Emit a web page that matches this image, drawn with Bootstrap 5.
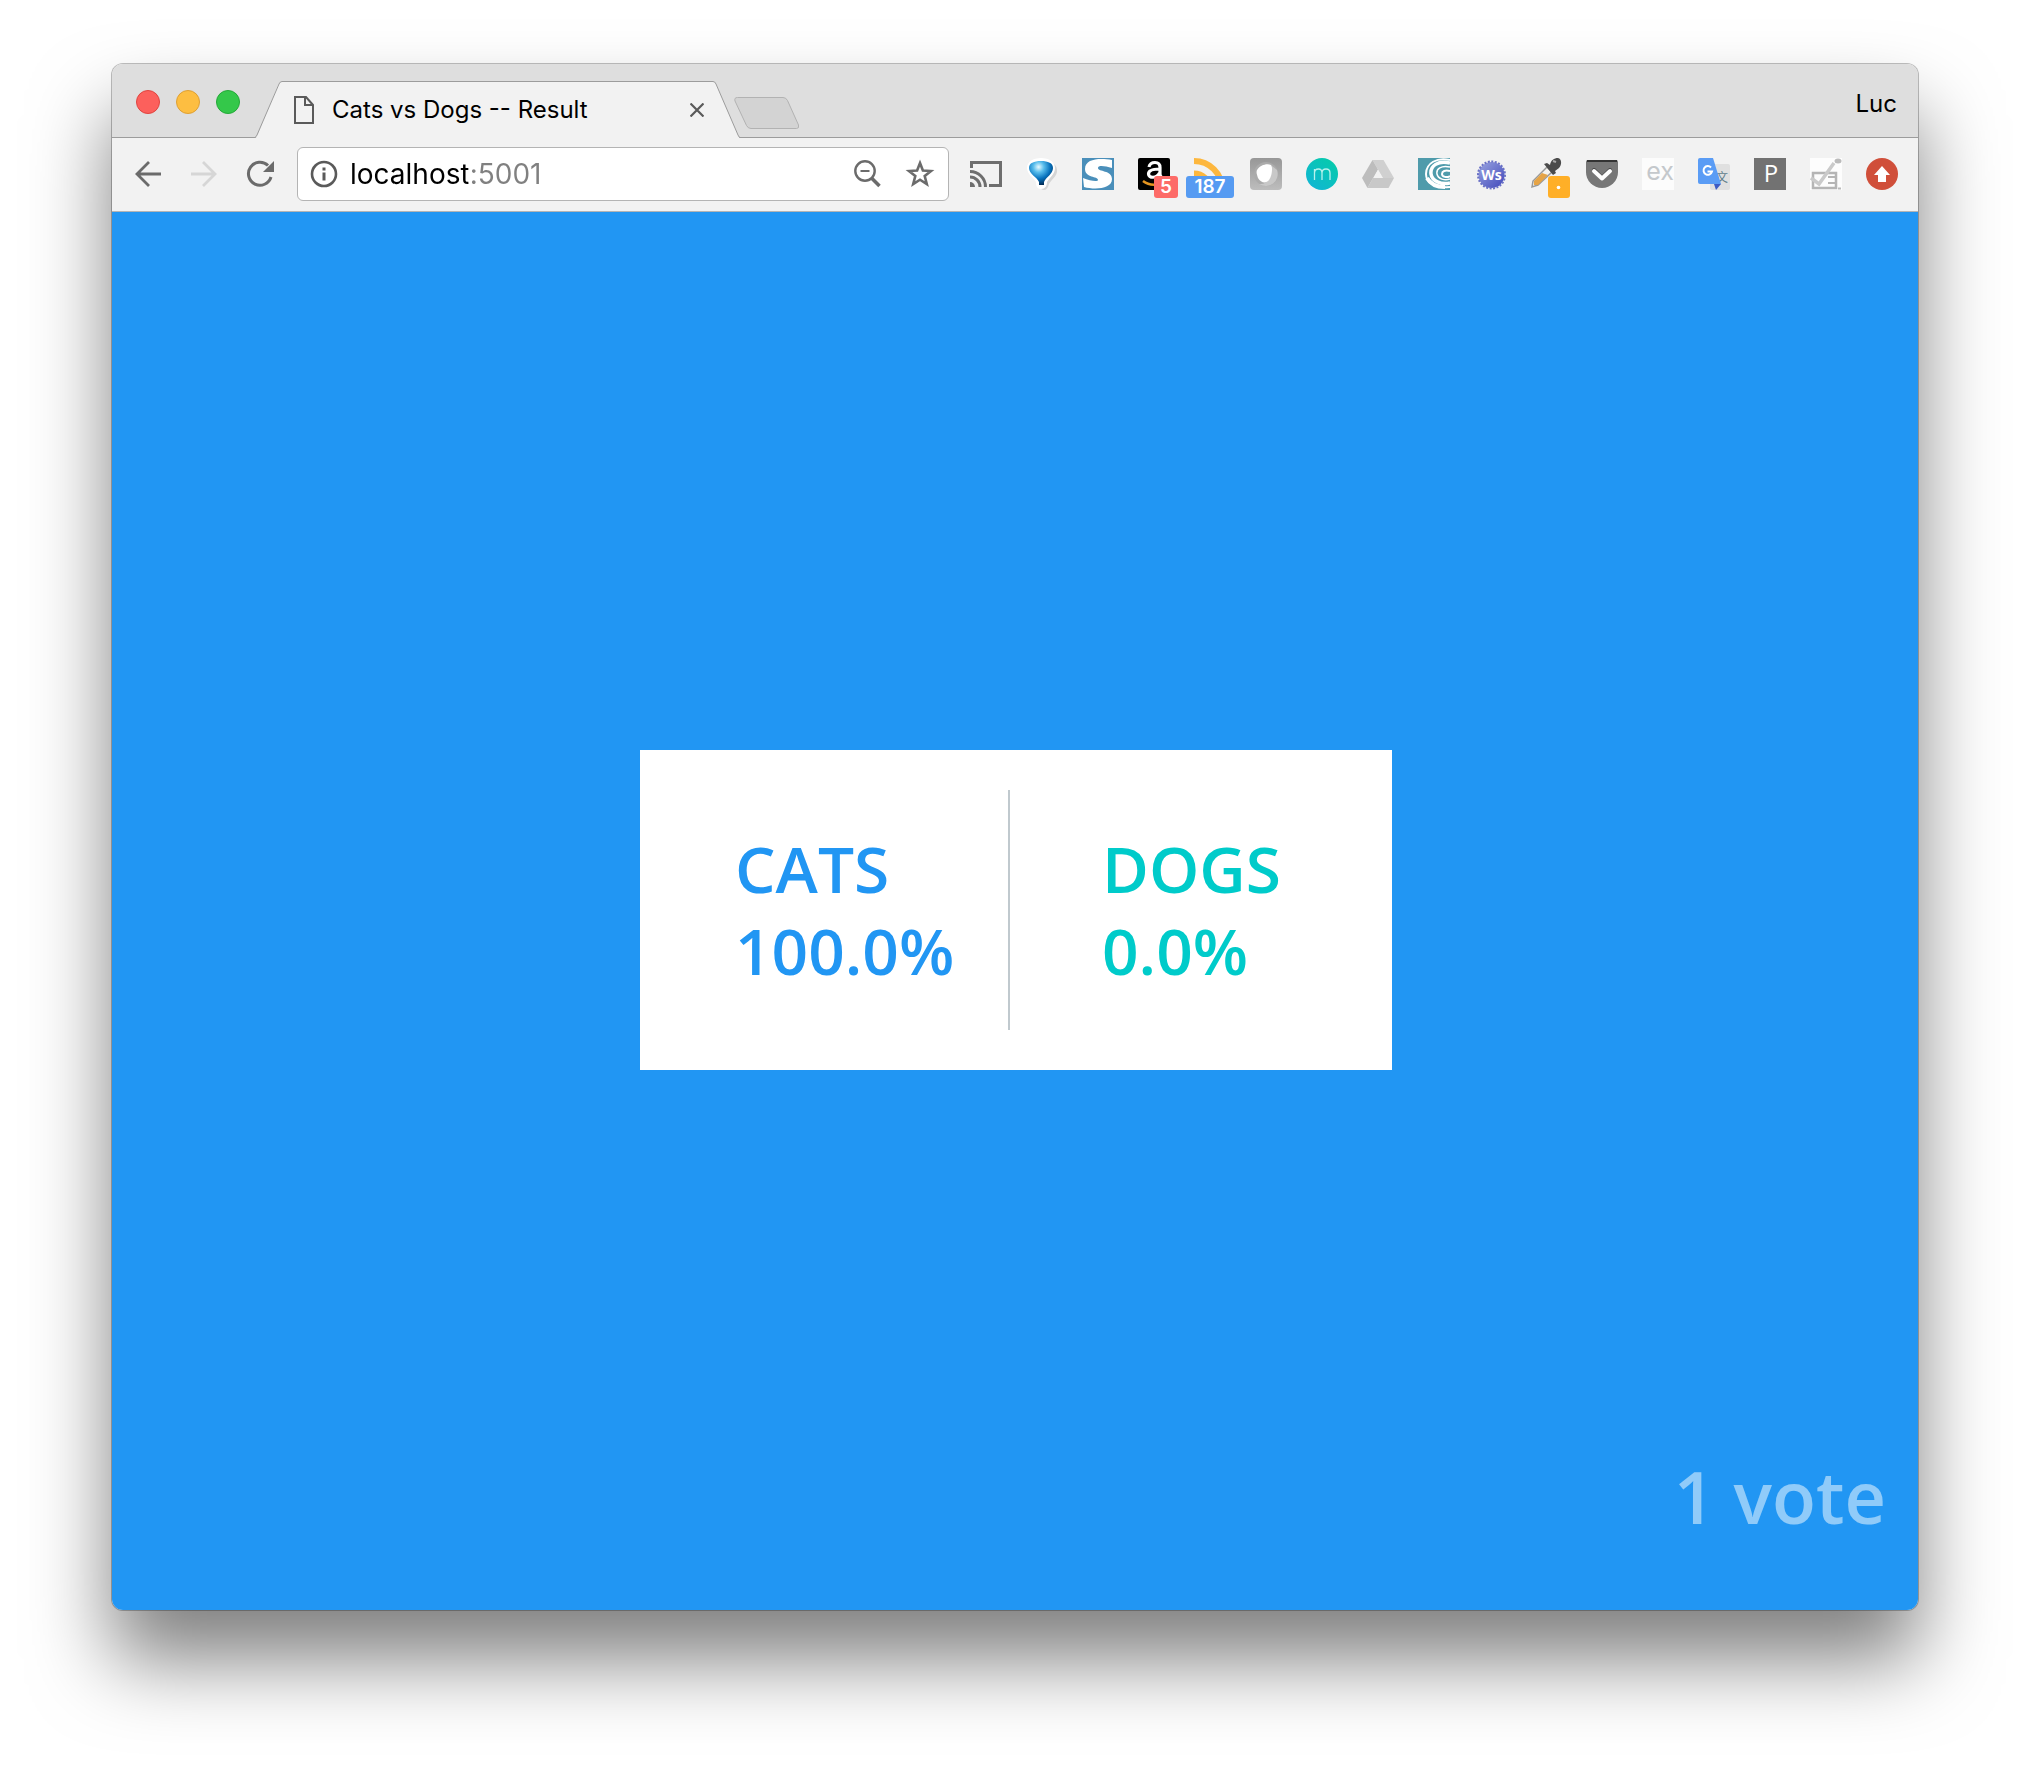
<!DOCTYPE html>
<html lang="en">
<head>
<meta charset="utf-8">
<meta name="viewport" content="width=device-width, initial-scale=1">
<title>Cats vs Dogs -- Result</title>
<link href="https://cdn.jsdelivr.net/npm/bootstrap@5.3.0/dist/css/bootstrap.min.css" rel="stylesheet">
<style>
  body { background: #fff; font-family: Inter, "Liberation Sans", sans-serif; color: #000; }
  .desktop { padding: 64px 112px 160px; min-height: 100vh; }
  .window { border-radius: 11px; box-shadow: 0 0 0 1px rgba(0,0,0,.25), 0 50px 80px rgba(0,0,0,.5); }
  .titlebar { height: 74px; background: #dedede; border-radius: 11px 11px 0 0; box-shadow: inset 0 -1px #9c9c9c; padding: 0 21px 0 24px; }
  .lights { padding-top: 26px; margin-right: 15px; }
  .light { width: 24px; height: 24px; border-radius: 50%; padding: 0; border: 1px solid; }
  .light-red { background: #fc605c; border-color: #e0443f; }
  .light-amber { background: #fdbe41; border-color: #dfa033; }
  .light-green { background: #34c84a; border-color: #24a938; }
  .tab-mid { width: 431px; height: 57px; background: #f2f2f2; border-top: 1px solid #9c9c9c; padding: 0 9px 0 12px; font-size: 24px; line-height: 28px; }
  .tab-title { padding-left: 18px; }
  .profile { font-size: 24px; line-height: 28px; padding-top: 26px; }
  .new-tab { margin: 0 0 9px -6px; }
  .plain { background: none; border: 0; padding: 0; display: flex; color: #6e6e6e; }
  .toolbar { height: 74px; background: #f2f2f2; border-bottom: 1px solid #b4b4b4; padding: 0 20px 2px; gap: 21px; }
  .nav-set { gap: 24px; }
  .omnibox { height: 54px; background: #fff; border: 1px solid #b4b4b4; border-radius: 6px; padding: 0 13px 0 12px; min-width: 0; }
  .url { font-size: 28px; line-height: 36px; padding: 0; margin-left: 12px; min-width: 0; border: 0; outline: 0; color: transparent; background: linear-gradient(90deg, #000 118px, #808080 118px); -webkit-background-clip: text; background-clip: text; }
  .exts { gap: 24px; }
  .ext { width: 32px; height: 32px; position: relative; }
  .tag { position: absolute; top: 18px; height: 22px; border-radius: 3px; color: #fff; font-size: 19px; line-height: 22px; font-weight: 600; text-align: center; }
  .tag-red { left: 16px; width: 24px; background: #fd6b68; }
  .tag-blue { left: -8px; width: 48px; background: #569bf2; }
  .tag-amber { left: 18px; width: 22px; background: #ffaf27; }
  .page { min-height: 1398px; background: #2196f3; border-radius: 0 0 11px 11px; padding: 0 0 2px 2px; font-family: "Open Sans", "Noto Sans", sans-serif; font-weight: 600; display: grid; grid-template-rows: 1fr auto 1fr; }
  .results { width: 752px; height: 320px; background: #fff; padding: 40px 0; grid-row: 2; justify-self: center; }
  .choice { padding-left: 95px; font-size: 64px; line-height: 82px; }
  .choice + .choice { padding-left: 92px; }
  .cats { width: 370px; border-right: 2px solid #c0c9ce; color: #2196f3; }
  .dogs { color: #00cbca; }
  .votes { grid-row: 3; align-self: end; text-align: right; font-size: 72px; line-height: 98px; padding: 0 32px 63px; color: rgba(255,255,255,.5); }
</style>
</head>
<body>
<div class="desktop">
 <div class="window">
  <header class="titlebar d-flex">
    <div class="lights d-flex gap-3">
      <button class="light light-red" aria-label="Close window"></button>
      <button class="light light-amber" aria-label="Minimise window"></button>
      <button class="light light-green" aria-label="Zoom window"></button>
    </div>
    <div class="d-flex align-items-end">
      <svg width="27" height="57" viewBox="0 0 27 57"><path d="M0 57Q2 56 3 53L23 4Q25 .5 27 .5V57Z" fill="#f2f2f2"/><path d="M0 56.500Q1 56 2 54L24 3Q25 .5 27 .5" fill="none" stroke="#9c9c9c"/></svg>
      <div class="tab-mid d-flex align-items-center">
        <svg width="20" height="28" viewBox="0 0 20 28" fill="none" stroke="#5a5a5a" stroke-width="2"><path d="M1 1h11l7 8v18H1zM11 1v8h8"/></svg>
        <span class="tab-title flex-grow-1 text-nowrap">Cats vs Dogs -- Result</span>
        <button class="plain" aria-label="Close tab"><svg width="14" height="14" viewBox="0 0 14 14" stroke="#5a5a5a" stroke-width="2.200"><path d="M.5.5l13 13M13.500.5l-13 13"/></svg></button>
      </div>
      <svg width="27" height="57" viewBox="0 0 27 57"><path d="M0 .5Q2 .5 3 3L25 54Q26 57 27 57H0Z" fill="#f2f2f2"/><path d="M0 .5Q2 .5 3 3L25 54Q26 56.500 27 56.500" fill="none" stroke="#9c9c9c"/></svg>
      <button class="plain new-tab" aria-label="New tab"><svg width="66" height="32" viewBox="0 0 66 32"><path d="M3.500.5H49Q52 .5 53.500 3.500L64.500 28Q65.500 31.500 62.500 31.500H17Q14 31.500 12.500 28.500L1 4Q0 .5 3.500.5Z" fill="#d3d3d3" stroke="#b2b2b2"/></svg></button>
    </div>
    <div class="profile ms-auto">Luc</div>
  </header>

  <nav class="toolbar d-flex align-items-center" aria-label="Browser toolbar">
    <div class="nav-set d-flex">
      <button class="plain" aria-label="Back"><svg width="32" height="32" viewBox="0 0 32 32" fill="none" stroke="#6b6b6b" stroke-width="2.800"><path d="M29 16H5M17 4L5 16l12 12"/></svg></button>
      <button class="plain" aria-label="Forward"><svg width="32" height="32" viewBox="0 0 32 32" fill="none" stroke="#d6d6d6" stroke-width="2.800"><path d="M3 16h24M15 4l12 12-12 12"/></svg></button>
      <button class="plain" aria-label="Reload"><svg width="32" height="32" viewBox="0 0 32 32"><path d="M27 19A11.500 11.500 0 1 1 24 7.500" fill="none" stroke="#6b6b6b" stroke-width="3"/><path d="M30 3v11H19z" fill="#6b6b6b"/></svg></button>
    </div>
    <div class="omnibox d-flex align-items-center flex-grow-1">
      <svg width="28" height="28" viewBox="0 0 28 28"><circle cx="14" cy="14" r="12" fill="none" stroke="#5a5a5a" stroke-width="2.600"/><path d="M12.500 7.500h3v3h-3zM12.500 12.500h3v8h-3z" fill="#5a5a5a"/></svg>
      <input class="url flex-grow-1" type="text" aria-label="Address" value="localhost:5001" spellcheck="false">
      <svg width="28" height="28" viewBox="0 0 28 28" fill="none" stroke="#6b6b6b"><circle cx="12" cy="11" r="9.700" stroke-width="2.400"/><path d="M7.500 11h9" stroke-width="2"/><path d="M18.500 18l8 8" stroke-width="3.600"/></svg>
      <button class="plain ms-4" aria-label="Bookmark this page"><svg width="30" height="30" viewBox="0 0 30 30"><path d="M15 4l2.900 7.500 8.100.5-6.300 5.100 2.100 8L15 20.700l-6.800 4.400 2.100-8L4 12l8.100-.5z" fill="none" stroke="#6b6b6b" stroke-width="2.600"/></svg></button>
    </div>
    <div class="exts d-flex">
      <div class="ext"><svg width="32" height="32" viewBox="0 0 32 32" fill="none" stroke="#6e6e6e" stroke-width="3"><path d="M1.500 10V4.500h29v23H19"/><path d="M0 13.500A15.500 15.500 0 0 1 15.500 29M0 19A10 10 0 0 1 10 29"/><path d="M0 24a5 5 0 0 1 5 5H0z" fill="#6e6e6e" stroke="none"/></svg></div>
      <div class="ext"><svg width="32" height="32" viewBox="0 0 32 32"><defs><radialGradient id="bal" cx=".4" cy=".25" r=".75"><stop offset="0" stop-color="#e8faff"/><stop offset=".3" stop-color="#58bdec"/><stop offset=".65" stop-color="#0872bd"/><stop offset="1" stop-color="#022e58"/></radialGradient></defs><path d="M4 14C4 6 10 3 18 3s14 4 13 11c-1 5-5 7-8 12-1 4-3 6-5 6-4 0-4-5-5-7z" fill="#d5d5d5"/><path d="M1 10C1 4 7 0 15 0s14 4 14 10c0 6-5 9-8 14 0 4-2 7-6 7s-5-3-5-7C7 19 1 16 1 10z" fill="#fff"/><path d="M3 10c0-5 5-7 12-7s12 2 12 7c0 6-7 9-9 14v3h-5v-3C11 19 3 16 3 10z" fill="url(#bal)"/></svg></div>
      <div class="ext"><svg width="32" height="32" viewBox="0 0 32 32"><path fill="#4a8fba" d="M0 0h32v32H0z"/><path d="M30 2v8c-7-2-14-3-14 0 0 4 14 2 14 11 0 10-17 11-28 8l-1-9c7 3 15 4 15 2 0-4-13-2-13-11C3 0 19 0 30 2z" fill="#fff"/></svg></div>
      <div class="ext"><svg width="32" height="32" viewBox="0 0 32 32"><rect width="32" height="32" rx="2" fill="#000"/><path d="M11 9q1-4.500 6-4.500 5 0 5 5V16q0 2 1.500 3M21.500 11c-7 0-11 1-11 5s8 5 11-1" fill="none" stroke="#fff" stroke-width="3.200"/><path d="M5 23q9 7 22 1" fill="none" stroke="#e59520" stroke-width="2.500"/></svg><span class="tag tag-red">5</span></div>
      <div class="ext"><svg width="32" height="32" viewBox="0 0 32 32" fill="none" stroke="#fdb73e" stroke-width="6"><path d="M0 3A28 28 0 0 1 28 31M0 15.500A16 16 0 0 1 16 31"/></svg><span class="tag tag-blue">187</span></div>
      <div class="ext"><svg width="32" height="32" viewBox="0 0 32 32"><defs><linearGradient id="gr" x2="0" y2="1"><stop stop-color="#979797"/><stop offset="1" stop-color="#bdbdbd"/></linearGradient></defs><rect width="32" height="32" rx="4" fill="url(#gr)"/><circle cx="16" cy="16" r="12" fill="#ababab"/><path d="M27 12a12 12 0 0 1-18 14c10 1 12-8 13-18z" fill="#c8c8c8"/><path d="M7 12c3-5 10-7 14-5 2 2 1 11-2 15s-8 3-11-2c-1-3-2-6-1-8z" fill="#fff"/></svg></div>
      <div class="ext"><svg width="32" height="32" viewBox="0 0 32 32"><defs><linearGradient id="tg" x1="1" x2=".2" y2="1"><stop stop-color="#05cda6"/><stop offset="1" stop-color="#10b6d4"/></linearGradient></defs><circle cx="16" cy="16" r="16" fill="url(#tg)"/><path d="M8.500 22V11m0 4q0-4 4-4 3.500 0 3.500 4v7m0-7q0-4 4-4t4 4v7" fill="none" stroke="#b7f1ec" stroke-width="1.300"/></svg></div>
      <div class="ext"><svg width="32" height="32" viewBox="0 0 32 32"><path d="M10.500 2h11L32 20H21z" fill="#d0d0d0"/><path d="M10.500 2L0 20l5.500 10L16 11.500z" fill="#bdbdbd"/><path d="M11 20h21l-5.500 10h-21z" fill="#c8c8c8"/><path d="M16 12l4.500 8h-9z" fill="#f2f2f2"/></svg></div>
      <div class="ext"><svg width="32" height="32" viewBox="0 0 32 32"><path fill="#4f9bab" d="M0 0h32v32H0z"/><g fill="none" stroke="#fff"><path d="M32 2C19-1 8 5 8 16c0 9 9 14 24 13" stroke-width="2"/><path d="M32 5C20 2 12 8 13 16c1 7 10 11 19 9" stroke-width="3.500"/><path d="M32 9c-9-2-14 2-13 7s8 7 13 5" stroke-width="1.500"/><path d="M32 13c-5-1-8 0-8 3s5 4 8 2" stroke-width="2"/><path d="M9 20q5 9 18 9" stroke-width="4"/></g></svg></div>
      <div class="ext"><svg width="32" height="32" viewBox="0 0 32 32"><defs><linearGradient id="ws" x2="1" y2="1"><stop stop-color="#9aa4e0"/><stop offset="1" stop-color="#4048bb"/></linearGradient></defs><circle cx="17.500" cy="17" r="13" fill="url(#ws)"/><circle cx="17.500" cy="17" r="13.500" fill="none" stroke="#6a71c6" stroke-width="2" stroke-dasharray="2 1.500"/><text x="17.500" y="22" text-anchor="middle" font-size="14" font-weight="700" fill="#fff" font-family="Open Sans, sans-serif">Ws</text></svg></div>
      <div class="ext"><svg width="32" height="32" viewBox="0 0 32 32"><path d="M2 29l1-6L17 9l5 5L8 27z" fill="#f5f3ee" stroke="#999" stroke-width="1.500"/><path d="M4 27v-4l8-8 6 2L8 27z" fill="#e6a446"/><path d="M14 6l3-1 3 2c1-5 4-7 8-7 4 1 4 7 1 10l-4 3 1 2-3 2z" fill="#4b4b4b"/><path d="M23 3l3 1" stroke="#aaa" stroke-width="2"/></svg><span class="tag tag-amber"><svg class="d-block" width="22" height="22"><circle cx="10.500" cy="11.500" r="1.800" fill="#fff"/></svg></span></div>
      <div class="ext"><svg width="32" height="32" viewBox="0 0 32 32"><path d="M0 4q0-2 2-2h28q2 0 2 2v10a16 16 0 0 1-32 0z" fill="#777"/><path d="M1 3h30" stroke="#333" stroke-width="2"/><path d="M8 12l8 8 8-8" fill="none" stroke="#444" stroke-width="4" stroke-linecap="round"/><path d="M8 13l8 7.500 8-7.500" fill="none" stroke="#fff" stroke-width="4" stroke-linecap="round" stroke-linejoin="round"/></svg></div>
      <div class="ext"><svg width="32" height="32" viewBox="0 0 32 32"><path fill="#fcfcfc" d="M0 0h32v32H0z"/><text x="18" y="22" text-anchor="middle" font-size="25" fill="#c4c8cc">ex</text></svg></div>
      <div class="ext"><svg width="32" height="32" viewBox="0 0 32 32"><rect x="12" y="6" width="20" height="26" rx="2" fill="#e0e0e0"/><text x="24" y="24" text-anchor="middle" font-size="12" fill="#607d8b" font-family="Noto Sans CJK SC, sans-serif">文</text><path d="M16 26h7l-5 6z" fill="#3d5cc4"/><path d="M2 0h13l8 26H2q-2 0-2-2V2q0-2 2-2z" fill="#5a9cf5"/><path d="M13 9.500a4.300 4.300 0 1 0 1 4H9.500" fill="none" stroke="#fff" stroke-width="2"/></svg></div>
      <div class="ext"><svg width="32" height="32" viewBox="0 0 32 32"><path fill="#727272" d="M0 0h32v32H0z"/><text x="17" y="24" text-anchor="middle" font-size="24" fill="#fff" font-family="Open Sans, sans-serif">P</text></svg></div>
      <div class="ext"><svg width="32" height="32" viewBox="0 0 32 32" fill="none"><path fill="#fdfdfd" d="M0 0h32v32H0z"/><path d="M3 15h23v15H3z" stroke="#b5b5b5" stroke-width="2.500"/><path d="M18 19h7M18 25h7" stroke="#b5b5b5" stroke-width="2"/><path d="M1 20l8 6L24 5" stroke="#cacaca" stroke-width="3.500"/><ellipse cx="28" cy="3" rx="3.500" ry="2.500" fill="#bbb"/><path d="M28 30.500h3" stroke="#bbb" stroke-width="2"/></svg></div>
      <div class="ext"><svg width="32" height="32" viewBox="0 0 32 32"><circle cx="16" cy="16" r="16" fill="#d04f3a"/><path d="M16 8l8 9h-4v7h-8v-7H8z" fill="#fff"/></svg></div>
    </div>
  </nav>

  <main class="page">
    <section class="results d-flex" aria-label="Results">
      <div class="choice cats d-flex flex-column justify-content-center"><div>CATS</div><div>100.0%</div></div>
      <div class="choice dogs d-flex flex-column justify-content-center"><div>DOGS</div><div>0.0%</div></div>
    </section>
    <div class="votes">1 vote</div>
  </main>
 </div>
</div>
<script src="https://cdn.jsdelivr.net/npm/bootstrap@5.3.0/dist/js/bootstrap.bundle.min.js"></script>
</body>
</html>
